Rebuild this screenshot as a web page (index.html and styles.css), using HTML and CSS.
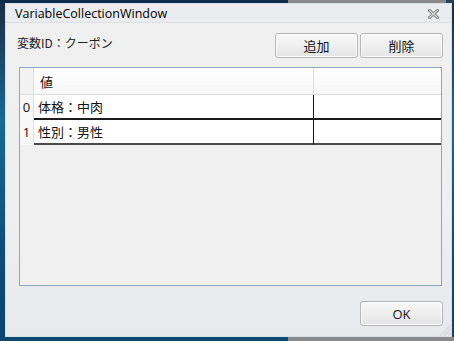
FILE: index.html
```html
<!DOCTYPE html>
<html lang="ja">
<head>
<meta charset="utf-8">
<title>VariableCollectionWindow</title>
<link rel="stylesheet" href="styles.css">
</head>
<body>
<div class="window">
  <div class="titlebar">
    <span class="title">VariableCollectionWindow</span>
    <svg class="close" width="11" height="10" viewBox="0 0 11 10">
      <path d="M1.5 1.5 L9.5 8.5 M9.5 1.5 L1.5 8.5" stroke="#8c8c8c" stroke-width="3" stroke-linecap="square" fill="none"/>
      <path d="M1.5 1.5 L9.5 8.5 M9.5 1.5 L1.5 8.5" stroke="#f4f4f4" stroke-width="1" fill="none"/>
    </svg>
  </div>
  <div class="client">
    <div class="toolbar">
      <span class="label">変数ID：クーポン</span>
      <div class="buttons">
        <button class="btn">追加</button>
        <button class="btn">削除</button>
      </div>
    </div>
    <div class="grid">
      <div class="row head">
        <div class="rh"></div>
        <div class="cell c1">値</div>
        <div class="cell c2"></div>
      </div>
      <div class="row data r0">
        <div class="rh">0</div>
        <div class="cell c1">体格：中肉</div>
        <div class="cell c2"></div>
      </div>
      <div class="row data r1">
        <div class="rh">1</div>
        <div class="cell c1">性別：男性</div>
        <div class="cell c2"></div>
      </div>
    </div>
    <div class="footer">
      <button class="btn ok">OK</button>
    </div>
    <svg class="grip" width="12" height="12" viewBox="0 0 12 12">
      <path d="M12 1 L1 12 M12 5 L5 12 M12 9 L9 12" stroke="#d4d7db" stroke-width="1.2" fill="none"/>
    </svg>
  </div>
</div>
</body>
</html>
```
FILE: styles.css
```css
html, body {
  margin: 0;
  padding: 0;
}
body {
  width: 454px;
  height: 341px;
  overflow: hidden;
  box-sizing: border-box;
  padding: 3px 2px 4px 5px;
  background:
    linear-gradient(to right, #0e2d4b 0 288px, #8a8a8a 288px 446px, #2b3f55 446px) top / 100% 3px no-repeat,
    linear-gradient(to right, #0a4a72 0 288px, #8a8a8a 288px) bottom / 100% 4px no-repeat,
    linear-gradient(to bottom, #1b2b44 0%, #1a6893 35%, #0f4c78 75%, #0b4570 100%);
  font-family: "Noto Sans CJK JP", "Open Sans", sans-serif;
}
.window {
  width: 447px;
  height: 334px;
  box-sizing: border-box;
  border: 1px solid #d9dfe6;
  background: #f0f0f0;
  display: flex;
  flex-direction: column;
}
.titlebar {
  height: 18px;
  flex: none;
  display: flex;
  align-items: center;
  justify-content: space-between;
  background: #eaecef;
  border-bottom: 1px solid #dcdfe3;
  padding: 0 12px 0 9px;
}
.title {
  font-family: "Open Sans", sans-serif;
  font-size: 12.5px;
  color: #000;
  line-height: 18px;
  padding-top: 1px;
}
.close {
  display: block;
  margin-top: 1px;
}
.client {
  position: relative;
  flex: 1;
  display: flex;
  flex-direction: column;
  padding: 10px 8px 10px 11px;
  background: linear-gradient(to bottom, #f0f0f0 0%, #eeeff0 60%, #e7e9ec 100%);
}
.toolbar {
  display: flex;
  justify-content: space-between;
  height: 25px;
}
.label {
  font-size: 12px;
  color: #222;
  line-height: 16px;
  padding-top: 2px;
}
.buttons {
  display: flex;
  gap: 2px;
}
.btn {
  width: 83px;
  height: 25px;
  box-sizing: border-box;
  border: 1px solid #b5b5b5;
  border-radius: 3px;
  background: linear-gradient(to bottom, #f8f8f8 0%, #efefef 50%, #e4e4e4 100%);
  box-shadow: inset 0 0 0 1px #fcfcfc;
  font-family: "Noto Sans CJK JP", "Open Sans", sans-serif;
  font-size: 13px;
  color: #111;
  padding: 0;
  line-height: 22px;
}
.grid {
  margin: 9px 1px 0 2px;
  height: 219px;
  box-sizing: border-box;
  border: 1px solid #8ea4bf;
  background: #f0f0f0;
  flex: none;
}
.row {
  display: flex;
}
.rh {
  width: 13px;
  flex: none;
  border-right: 1px solid #dedede;
  background: #f8f8f8;
  font-family: "Open Sans", sans-serif;
  font-size: 13px;
  text-align: center;
  color: #111;
}
.cell {
  box-sizing: border-box;
  font-size: 13px;
  color: #111;
  white-space: nowrap;
}
.c1 {
  width: 280px;
  padding-left: 4px;
}
.c2 {
  flex: 1;
}
.head {
  height: 26px;
  border-bottom: 1px solid #dcdcdc;
}
.head .rh {
  background: #f2f2f2;
}
.head .cell {
  background: linear-gradient(to bottom, #ffffff 0%, #f7f7f7 100%);
  line-height: 28px;
  padding-left: 6px;
}
.head .c1 {
  border-right: 1px solid #dadada;
}
.head .c2 {
  padding-left: 0;
}
.data {
  height: 25px;
}
.data .rh {
  line-height: 25px;
}
.data .cell {
  background: #fff;
  border-bottom: 2px solid #1c1c1c;
  line-height: 23px;
}
.data .c1 {
  border-right: 1px solid #111;
}
.r1 .cell {
  border-bottom-color: #4a4a4a;
}
.footer {
  margin-top: 15px;
  display: flex;
  justify-content: flex-end;
}
.ok {
  font-family: "Open Sans", sans-serif;
  font-size: 13px;
}
.grip {
  position: absolute;
  right: 0;
  bottom: 0;
}
```
